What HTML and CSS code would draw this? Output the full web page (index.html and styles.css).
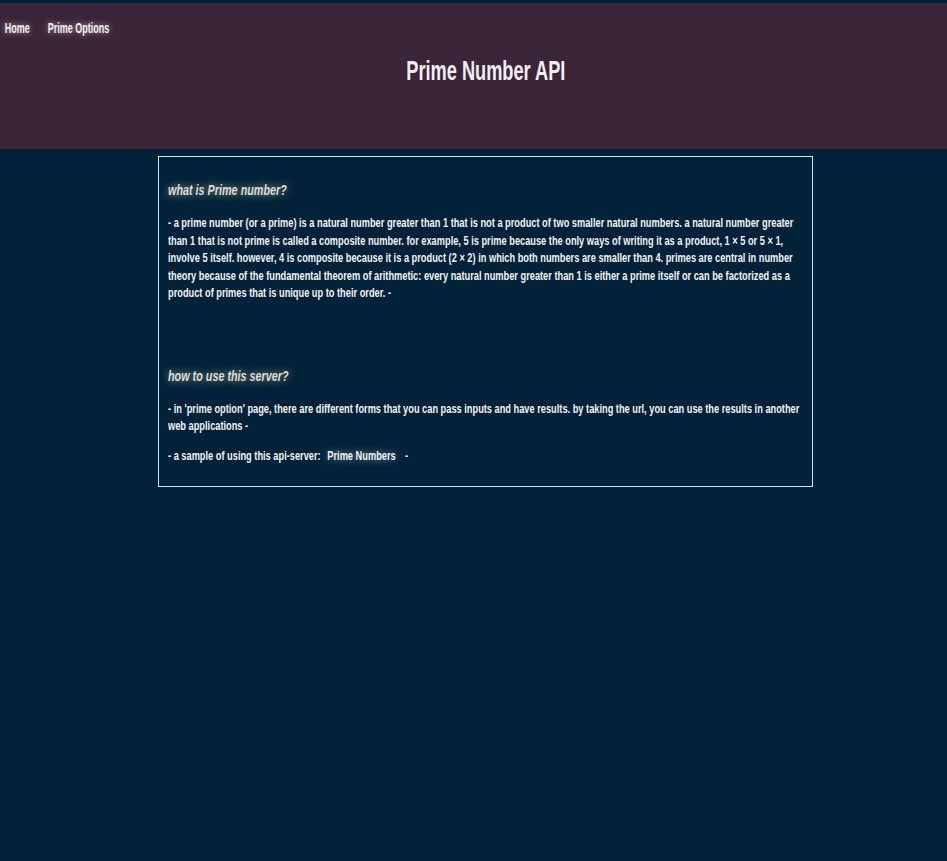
FILE: index.html
```html
<!DOCTYPE html>
<html lang="en">
<head>
<meta charset="utf-8">
<title>Prime Number API</title>
<link rel="stylesheet" href="styles.css">
</head>
<body>
<header class="site-header">
  <nav class="nav">
    <a class="nav-link" href="#">Home</a>
    <a class="nav-link" href="#">Prime Options</a>
  </nav>
  <h1 class="title">Prime Number API</h1>
</header>
<main class="content">
  <section class="block">
    <h3 class="block-title">what is Prime number?</h3>
    <p class="text">- a prime number (or a prime) is a natural number greater than 1 that is not a product of two smaller natural numbers. a natural number greater than 1 that is not prime is called a composite number. for example, 5 is prime because the only ways of writing it as a product, 1 × 5 or 5 × 1, involve 5 itself. however, 4 is composite because it is a product (2 × 2) in which both numbers are smaller than 4. primes are central in number theory because of the fundamental theorem of arithmetic: every natural number greater than 1 is either a prime itself or can be factorized as a product of primes that is unique up to their order. -</p>
  </section>
  <section class="block block-second">
    <h3 class="block-title">how to use this server?</h3>
    <p class="text">- in 'prime option' page, there are different forms that you can pass inputs and have results. by taking the url, you can use the results in another web applications -</p>
    <p class="text">- a sample of using this api-server: <a class="sample-link" href="#">Prime Numbers</a> -</p>
  </section>
</main>
</body>
</html>
```
FILE: styles.css
```css
html, body {
  margin: 0;
  padding: 0;
}
body {
  background: #02223a;
  padding-top: 3px;
  font-family: "Liberation Sans", Arial, sans-serif;
  color: #f2f2f2;
  overflow-x: hidden;
}
.site-header {
  background: #3b2639;
  height: 146px;
  box-sizing: border-box;
  padding-top: 15px;
}
.nav {
  display: flex;
  gap: 30px;
  padding-left: 8px;
  width: calc(100% / 0.6);
  transform: scaleX(0.6);
  transform-origin: left top;
}
.nav-link {
  color: #f4eef4;
  text-decoration: none;
  font-weight: bold;
  font-size: 15px;
  line-height: 20px;
  text-shadow: 0 0 8px rgba(255, 255, 255, 0.55);
}
.title {
  margin: 17px 0 0;
  text-align: center;
  font-size: 28px;
  line-height: 32px;
  font-weight: bold;
  color: #f3eef4;
  padding-left: 38px;
  transform: scaleX(0.65);
}
.content {
  width: 655px;
  height: 331px;
  box-sizing: border-box;
  margin: 7px 0 0 158px;
  border: 1px solid #cfe3ea;
  padding: 23px 12px 0 9px;
}
.block-title {
  margin: 0 0 14px;
  font-size: 15px;
  line-height: 20px;
  font-style: italic;
  font-weight: bold;
  color: #dcdcd8;
  text-shadow: 0 0 10px rgba(235, 220, 160, 0.7);
  width: calc(100% / 0.72);
  transform: scaleX(0.72);
  transform-origin: left top;
}
.block-second {
  margin-top: 64px;
}
.text {
  margin: 0 0 12px;
  font-size: 13.5px;
  line-height: 17.5px;
  font-weight: bold;
  width: calc(100% / 0.685);
  transform: scaleX(0.685);
  transform-origin: left top;
}
.sample-link {
  color: #f2f2f2;
  text-decoration: none;
  margin: 0 10px 0 6px;
  text-shadow: 0 0 10px rgba(200, 230, 255, 0.6);
}
```
